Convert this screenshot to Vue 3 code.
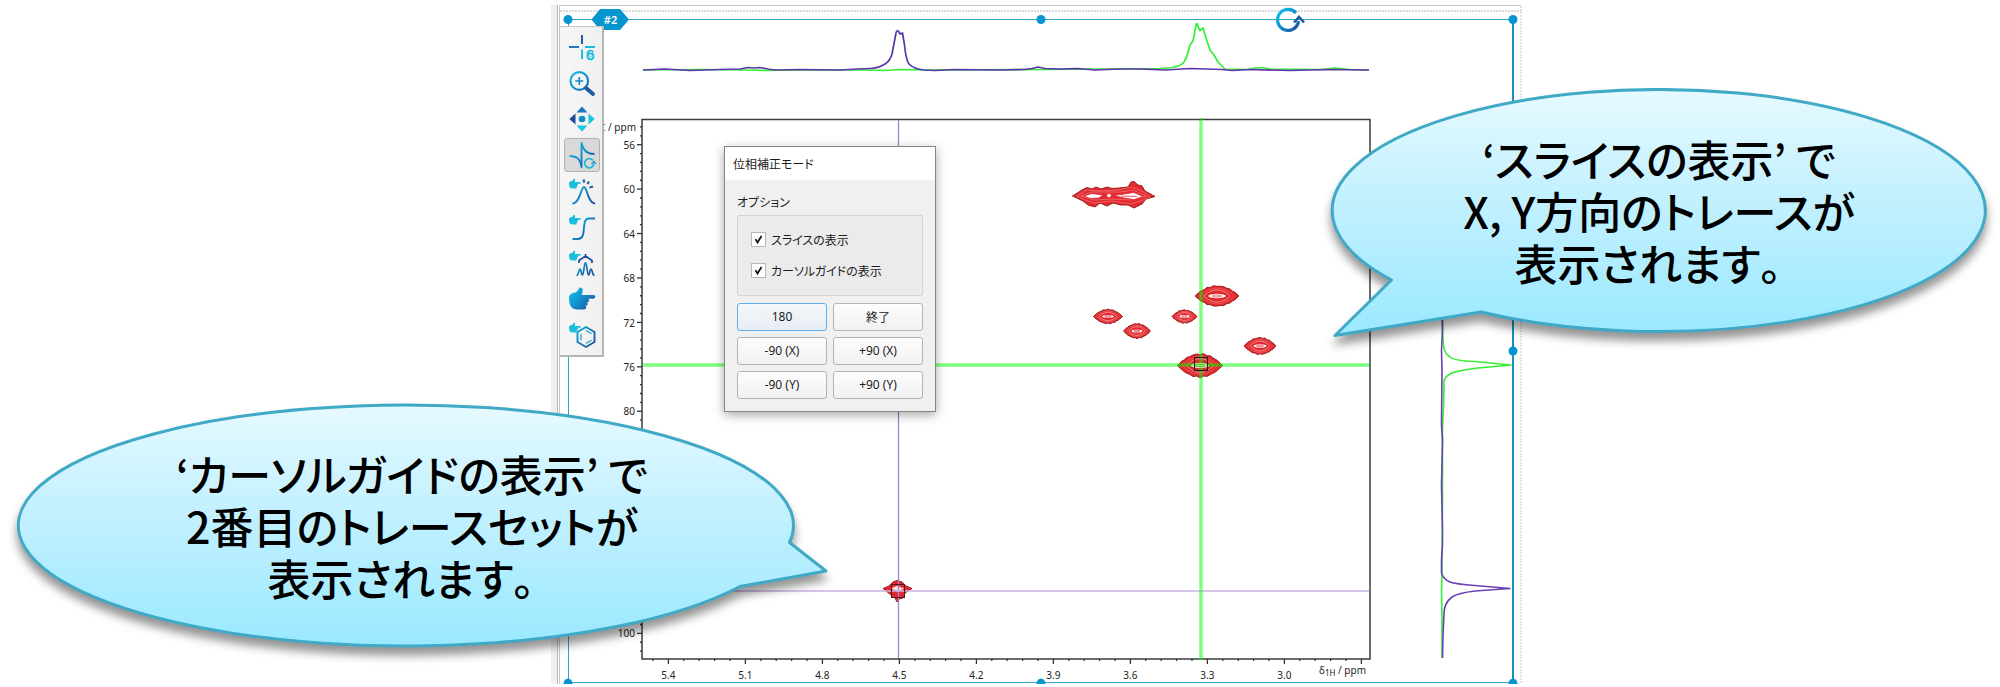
<script setup>
import { ref } from 'vue'

const showSlices = ref(true)
const showGuides = ref(true)
const activeTool = ref('phase')

const tools = [
  { id: 'cursor', label: 'カーソル' },
  { id: 'zoom', label: '拡大' },
  { id: 'move', label: '移動' },
  { id: 'phase', label: '位相補正' },
  { id: 'peak', label: 'ピーク' },
  { id: 'integral', label: '積分' },
  { id: 'multiplet', label: '多重線' },
  { id: 'hand', label: '選択' },
  { id: 'structure', label: '構造' },
]

const xMajor = ['5.4', '5.1', '4.8', '4.5', '4.2', '3.9', '3.6', '3.3', '3.0', '']
const xTicks = []
for (let i = -1; i <= 45; i++) {
  xTicks.push({ x: 668.4 + i * 15.4, major: i % 5 === 0, label: i % 5 === 0 ? xMajor[i / 5] : '' })
}
const xLabels = xTicks.filter((t) => t.label)

const yTicks = []
for (let i = -2; i <= 57; i++) {
  yTicks.push({ y: 144.7 + i * 8.885, major: i % 5 === 0 })
}
const yLabels = [56, 60, 64, 68, 72, 76, 80, 100].map((v) => ({ v, y: 149 + (v - 56) * 11.1 }))

// Outline of one contour level around a cross peak.
function contour(p, k) {
  const pts = []
  const n = 40
  for (let i = 0; i < n; i++) {
    const a = (i / n) * Math.PI * 2
    const c = Math.cos(a)
    const s = Math.sin(a)
    const wobble = 1 + 0.07 * Math.sin(i * 2.7 + p.x) * k
    const px = p.x + c * p.w * k
    const py = p.y + Math.sign(s) * Math.pow(Math.abs(s), 1.9) * p.h * k * wobble
    pts.push(px.toFixed(1) + ',' + py.toFixed(1))
  }
  return pts.join(' ')
}

const peaks = [
  { x: 1217, y: 296, w: 22, h: 10 },
  { x: 1108, y: 316.5, w: 14.5, h: 7 },
  { x: 1137, y: 331, w: 13.5, h: 7.2 },
  { x: 1184.5, y: 316.5, w: 12.5, h: 6.5 },
  { x: 1260, y: 346, w: 16, h: 8.2 },
  { x: 1200, y: 365.5, w: 22.5, h: 11.5 },
]
</script>

<template>
  <main class="stage">
    <svg class="plot" viewBox="0 0 2000 687" aria-hidden="true">
      <defs>
        <linearGradient id="gRot" x1="0" y1="0" x2="1" y2="1">
          <stop offset="0" stop-color="#12c8e8" /><stop offset="0.5" stop-color="#0d8ccc" /><stop offset="1" stop-color="#1f4f9c" />
        </linearGradient>
      </defs>

      <!-- page edges -->
      <rect x="551" y="5" width="6" height="679" fill="#f0f0f0" />
      <path d="M557.5 5V684" stroke="#b8b8b8" />
      <path d="M559.5 684V5.500H1521" stroke="#c8c8c8" fill="none" />
      <path d="M560 11H1521" stroke="#b2b2b2" stroke-dasharray="2 1" />
      <path d="M1521 6V684" stroke="#c9c9c9" stroke-dasharray="2 1" />

      <!-- selection frame -->
      <path d="M568.500 684V19.500H1513" stroke="#2ea3c8" fill="none" />
      <path d="M568 682.500H1513" stroke="#3fa9cf" />
      <path d="M1513 19V684" stroke="#1c8fb8" stroke-width="2" />
      <g fill="#0795cf">
        <circle cx="568" cy="19.500" r="4.500" /><circle cx="1041" cy="19.500" r="4.500" />
        <circle cx="1513" cy="19.500" r="4.500" /><circle cx="1513" cy="351" r="4.500" />
        <path d="M563.500 684a4.500 5.500 0 0 1 9 0zM1036.500 684a4.500 5.500 0 0 1 9 0zM1508.500 684a4.500 5.500 0 0 1 9 0z" />
        <path d="M591.500 19.500L600 9H620L629 19.500L620 30H600Z" />
      </g>
      <text x="610.500" y="24" class="tag">#2</text>

      <path d="M1296 13A10.500 10.500 0 1 0 1298.500 21" fill="none" stroke="url(#gRot)" stroke-width="3.200" />
      <path d="M1294 22.500L1299 17L1304 22.500" fill="none" stroke="#1f5aa6" stroke-width="2.600" />

      <!-- top traces -->
      <g fill="none" stroke-width="1.700" stroke-linejoin="round">
        <path stroke="#35ee35" d="M643 70L700 69.500L745 70L765 70.500L790 70L860 70L885 70.500L900 69.500L930 70L1040 69.500L1110 69L1160 68.500L1172 67.500Q1181 66 1184 62L1187 56L1190 45L1193 41L1196 25Q1197 21 1198.500 28L1200 30.500L1203 28L1206 38L1210 50L1214 55L1218 62L1225 69L1248 69.500L1255 68L1262 67.500L1270 69L1320 69.500L1335 68L1350 69.500L1369 70" />
        <path stroke="#5b35ad" d="M643 70L665 69L690 70.500L720 69.500L740 69L748 67.500L754 68L760 67.500L768 69L775 70L800 69.500L840 70L858 69L870 68.500Q879 68 885 64Q890 61 892 54L896 33Q897 29 899 32L900 34L902.500 33L904.500 45Q906 60 909 64Q914 69 924 70L935 70.500L955 69.500L1000 70L1024 69.500L1032 68.500L1038 67L1045 68.500L1060 69L1078 68.500L1095 70L1120 69L1140 69L1165 70L1190 68.500L1222 69.500L1232 70.500L1250 69.500L1290 70.500L1330 69.500L1369 70" />
      </g>

      <!-- side traces -->
      <g fill="none" stroke-width="1.600" stroke-linejoin="round">
        <path stroke="#35ee35" d="M1443 310L1442.500 330L1443.500 345Q1444 353 1450 357Q1455 361 1475 361.500L1511 365L1478 368Q1455 371 1450 374Q1443 378 1444 384L1443.500 405L1442.500 430L1442.500 500L1442 575L1441.500 590L1442 620L1442 658" />
        <path stroke="#6840b4" d="M1442 310L1442.500 330L1441.500 350L1442 370L1441.500 425L1442.500 440L1441.500 485L1442.500 530L1442.500 545L1441.500 560L1441.500 573Q1444 580 1450 582Q1455 584 1475 585.500L1510 588.500L1475 591Q1458 593 1452 597Q1444 603 1444 614L1443 635L1442.500 658" />
      </g>

      <!-- axes -->
      <path d="M642 119.500H1370V659H642Z" fill="#fff" stroke="#3c3c3c" stroke-width="1.500" />
      <g stroke="#333" stroke-width="1.300">
        <line v-for="t in xTicks" :key="'x' + t.x" :x1="t.x" :x2="t.x" y1="659" :y2="t.major ? 664 : 661" />
        <line v-for="t in yTicks" :key="'y' + t.y" :y1="t.y" :y2="t.y" x2="642" :x1="t.major ? 637 : 640" />
      </g>
      <g class="axis">
        <text v-for="t in xLabels" :key="'xl' + t.x" :x="t.x" y="679" text-anchor="middle">{{ t.label }}</text>
        <text v-for="t in yLabels" :key="'yl' + t.v" :y="t.y" x="635" text-anchor="end">{{ t.v }}</text>
      </g>
      <text class="unit" x="1366" y="674" text-anchor="end">δ<tspan class="sub" dy="2">1H</tspan><tspan dy="-2"> / ppm</tspan></text>
      <text class="unit" x="636" y="131" text-anchor="end"><tspan class="sub">C</tspan> / ppm</text>

      <!-- contour peaks -->
      <g stroke-linejoin="round">
        <path d="M1072.500 196L1082 190L1087 187.500L1092 189L1096 187L1101 189L1107 187L1112 188.500L1119 188L1128 187L1131 182L1134 181.500L1138 185L1142 186L1145 191L1155 196.500L1146 199L1142 204L1134 208L1128 205L1121 205L1113 203L1107 206L1100 203L1095 207L1088 205L1083 201Z" fill="#e2292f" stroke="#9c2020" />
        <g fill="none" stroke="#f79a9a" stroke-width="0.500">
          <path d="M1077 196L1087 190L1100 191L1118 190L1132 187L1142 191L1150 196.500L1141 201L1130 204L1112 201L1094 203L1085 200Z" />
          <path d="M1081 196L1091 192L1106 192L1120 192L1133 190L1146 196L1132 200L1112 199L1094 200Z" />
        </g>
        <g fill="#fff" stroke="#e02a32" stroke-width="0.800">
          <path d="M1084 196L1092 193.500L1103 195L1099 198L1090 198.500Z" />
          <path d="M1114 195.500L1124 194L1134 192.500L1143 196.500L1134 199.500L1124 198Z" />
        </g>
        <path d="M1121 196L1137 196.500" stroke="#e02a32" stroke-width="0.800" />
        <circle cx="1109" cy="195.500" r="2.300" fill="#fff" stroke="#e02a32" />
        <template v-for="p in peaks" :key="p.x">
          <polygon :points="contour(p, 1)" fill="#e2292f" stroke="#9c2020" />
          <polygon :points="contour(p, 0.78)" fill="none" stroke="#f58080" stroke-width="0.500" />
          <polygon :points="contour(p, 0.6)" fill="none" stroke="#ffc4c4" stroke-width="0.600" />
          <ellipse :cx="p.x" :cy="p.y" :rx="p.w * 0.4" :ry="p.h * 0.22" fill="#fff" />
          <ellipse :cx="p.x" :cy="p.y" :rx="p.w * 0.22" :ry="p.h * 0.1" fill="none" stroke="#e02a32" stroke-width="0.700" />
        </template>
        <path d="M883 588.500L889 586L893 582L897 580.500L902 582L906 586L912 588.500L905 593L903 598L899 599L897 602L895 598L891 595Z" fill="#e2292f" stroke="#9c2020" />
        <path d="M890 588.500L897 585.500L905 588.500L898 592Z" fill="#ffdede" stroke="#e02a32" stroke-width="0.700" />
      </g>

      <!-- cursor guides -->
      <g v-show="showGuides">
        <path d="M898.500 120V658" stroke="#9c86d2" stroke-width="1.300" />
        <path d="M643 591H1369" stroke="#c8b3e2" stroke-width="1.300" />
        <rect x="891.500" y="584.500" width="13" height="13" fill="none" stroke="#501818" />
      </g>
      <path d="M1201 118V660M643 365H1369" stroke="#00ff00" stroke-opacity="0.500" stroke-width="3.500" />
      <rect x="1194.500" y="357.500" width="13" height="13" fill="none" stroke="#1c1c1c" />
    </svg>

    <nav class="toolbar" aria-label="ツール">
      <button
        v-for="t in tools"
        :key="t.id"
        type="button"
        class="tool"
        :class="{ active: activeTool === t.id }"
        :aria-label="t.label"
        :aria-pressed="activeTool === t.id"
        @click="activeTool = t.id"
      >
        <svg class="icon" viewBox="0 0 26 26" fill="none" stroke-width="1.900">
          <defs>
            <linearGradient :id="'g' + t.id" gradientUnits="userSpaceOnUse" x1="0" y1="2" x2="26" y2="24">
              <stop offset="0" stop-color="#14c6e6" /><stop offset="0.5" stop-color="#118bc8" /><stop offset="1" stop-color="#1f4a98" />
            </linearGradient>
          </defs>
          <g v-if="t.id === 'cursor'">
            <path d="M13 1V10" stroke="#20509c" /><path d="M0 13H10" stroke="#1a70b4" />
            <path d="M16 13H26M13 15.500V25" stroke="#17bedd" />
            <circle cx="21.500" cy="22.300" r="3" stroke="#17bedd" stroke-width="1.800" />
            <path d="M18.500 22V19.500A3 3 0 0 1 24.300 18.500" stroke="#17bedd" stroke-width="1.600" />
            <circle cx="21.500" cy="22.300" r="0.900" fill="#17bedd" />
          </g>
          <g v-else-if="t.id === 'zoom'">
            <circle cx="10.300" cy="11" r="8.800" stroke="url(#gzoom)" stroke-width="2.200" />
            <path d="M10.300 7V15M6.300 11H14.300" stroke="#118bc8" stroke-width="1.600" />
            <path d="M17 18L24 24" stroke="#1d5ba5" stroke-width="4" stroke-linecap="round" />
          </g>
          <g v-else-if="t.id === 'move'">
            <circle cx="13" cy="13" r="3.300" fill="url(#gmove)" />
            <path d="M13 0.500L18.500 6.500H7.500Z" fill="#1778bb" /><path d="M13 25.500L18.500 19.500H7.500Z" fill="#17c6df" />
            <path d="M0.300 13L6.500 7.500V18.500Z" fill="#1e4b97" /><path d="M25.700 13L19.500 7.500V18.500Z" fill="#17c6df" />
          </g>
          <g v-else-if="t.id === 'phase'">
            <path d="M0.500 14C7 14 11 16 12.500 25V1C15 10 19 12 25.500 12" stroke="url(#gphase)" stroke-linejoin="round" />
            <path d="M24 18.500A4.600 4.600 0 1 0 24.800 22" stroke="#22b7d8" stroke-width="1.700" />
            <path d="M22.500 22L25 19.500L27 22" stroke="#2393c6" stroke-width="1.400" />
          </g>
          <g v-else-if="t.id === 'peak'">
            <path d="M3.500 25.500C11 25.500 12 9 15 9S19 25.500 26 25.500" stroke="url(#gpeak)" />
            <path d="M14.500 1.500L15.300 4.500M20 3.500L18.500 6M24 8.500L20.500 9.500" stroke="#1e5fab" stroke-width="2.200" />
          </g>
          <g v-else-if="t.id === 'integral'">
            <path d="M3.500 25H9C19 25 11 4.500 20 4.500H26" stroke="url(#gintegral)" />
          </g>
          <g v-else-if="t.id === 'multiplet'">
            <path d="M16.500 4V8M10 13V10.500L16.500 6L23 10.500V13" stroke="#1f4a98" stroke-width="1.700" />
            <path d="M7.500 25.500C10 25.500 9.500 19 11 19S12 25 13.500 25S15 12.500 16.500 12.500S18 25 19.500 25S20.500 19 22 19S23 25.500 25.500 25.500" stroke="url(#gmultiplet)" stroke-width="1.700" />
          </g>
          <g v-else-if="t.id === 'structure'">
            <path d="M17 5L25.500 10V20L17 25L8.500 20V10Z" stroke="url(#gstructure)" />
            <path d="M12 12V18.500M17 8.500L22.500 11.700M17 21.500L22.500 18.300" stroke="#17a4d0" stroke-width="1.200" />
          </g>
          <path
            v-if="['peak', 'integral', 'multiplet', 'structure', 'hand'].includes(t.id)"
            :class="{ small: t.id !== 'hand' }"
            :fill="t.id === 'hand' ? 'url(#ghand)' : '#18bedd'"
            d="M0 12C0 8 3 7 6 6.500C9 6 9.500 2 11 1.500C14 1 14.500 5 12.500 9H24.500C26.800 9 26.800 12.500 24.500 12.800H18.500C20.800 13.300 20.500 16 18.500 16.300H17.500C19.500 17 19 19.500 17 19.800H16C18 20.500 17.500 23.500 15 23.500H8C3 23.500 0 20 0 12Z"
          />
        </svg>
      </button>
    </nav>

    <form class="dialog" @submit.prevent>
      <h1 class="title">位相補正モード</h1>
      <div class="body">
        <fieldset class="options">
          <legend>オプション</legend>
          <div class="box">
            <label class="check"><input v-model="showSlices" type="checkbox" /><span class="mark"><svg viewBox="0 0 15 15"><path d="M4 7L6.300 11L11 3.500" /></svg></span>スライスの表示</label>
            <label class="check"><input v-model="showGuides" type="checkbox" /><span class="mark"><svg viewBox="0 0 15 15"><path d="M4 7L6.300 11L11 3.500" /></svg></span>カーソルガイドの表示</label>
          </div>
        </fieldset>
        <div class="actions">
          <button type="button" class="act primary">180</button>
          <button type="button" class="act">終了</button>
          <button type="button" class="act">-90 (X)</button>
          <button type="button" class="act">+90 (X)</button>
          <button type="button" class="act">-90 (Y)</button>
          <button type="button" class="act">+90 (Y)</button>
        </div>
      </div>
    </form>

    <aside class="callout right">
      <svg class="bubble" viewBox="1330 88 658 250" aria-hidden="true">
        <defs>
          <linearGradient id="gBubble" x1="0" y1="0" x2="0" y2="1">
            <stop offset="0" stop-color="#e6faff" /><stop offset="0.400" stop-color="#c6f1ff" /><stop offset="1" stop-color="#9ae9ff" />
          </linearGradient>
        </defs>
        <path d="M1391.500 280A326.500 121 0 1 1 1481 312L1335 335.500Z" fill="url(#gBubble)" stroke="#3fa9c6" stroke-width="3" stroke-linejoin="round" />
      </svg>
      <p class="say">‘スライスの表示’ で<br />X, Y方向のトレースが<br />表示されます<span class="full">。</span></p>
    </aside>

    <aside class="callout left">
      <svg class="bubble" viewBox="16 403 812 246" aria-hidden="true">
        <path d="M740 586.500A387.500 120.500 0 1 1 789.500 542.500L826 571Z" fill="url(#gBubble)" stroke="#3fa9c6" stroke-width="3" stroke-linejoin="round" />
      </svg>
      <p class="say">‘カーソルガイドの表示’ で<br />2番目のトレースセットが<br />表示されます<span class="full">。</span></p>
    </aside>
  </main>
</template>

<style>
body {
  margin: 0;
  background: #fff;
}
</style>

<style scoped>
.stage {
  position: relative;
  overflow: hidden;
  font-family: "Noto Sans", "Noto Sans CJK JP", sans-serif;
  color: #1c1c1c;
}
.plot {
  display: block;
  width: 100%;
  height: auto;
}
.tag {
  font-size: 11px;
  font-weight: 600;
  fill: #fff;
  text-anchor: middle;
}
.axis {
  font-size: 10px;
  fill: #222;
}
.unit {
  font-size: 10px;
  fill: #222;
}
.sub {
  font-size: 8px;
}

.toolbar {
  position: absolute;
  left: 27.95%;
  top: 3.8%;
  display: flex;
  flex-direction: column;
  align-items: center;
  gap: 2px;
  padding: 3px 2px;
  background: linear-gradient(90deg, #f6f6f6, #f0f0f0);
  border: 1px solid #c6c6c6;
  border-right: 2px solid #b4b4b4;
  border-bottom: 2px solid #b4b4b4;
}
.tool {
  display: grid;
  place-items: center;
  width: 36px;
  height: 34px;
  margin-left: 2px;
  padding: 0;
  background: none;
  border: 1px solid transparent;
  border-radius: 3px;
}
.tool.active {
  background: #d9d9d9;
  border-color: #b2b2b2;
}
.icon {
  width: 26px;
  height: 26px;
  overflow: visible;
}
.small {
  transform: scale(0.45);
}

.dialog {
  position: absolute;
  left: 36.2%;
  top: 21.25%;
  box-sizing: border-box;
  width: 212px;
  background: #f0f0f0;
  border: 1px solid #858585;
  box-shadow: 0 3px 10px rgba(0, 0, 0, 0.35);
  font-family: "Noto Sans CJK JP", sans-serif;
  font-size: 12px;
  font-feature-settings: "palt";
}
.title {
  margin: 0;
  padding: 0 8px;
  background: #fff;
  font-size: 12px;
  font-weight: 400;
  line-height: 33px;
}
.body {
  padding: 12px;
}
.options {
  margin: 0;
  padding: 0;
  border: 0;
}
.options legend {
  padding: 0;
  line-height: 20px;
}
.box {
  display: flex;
  flex-direction: column;
  gap: 11px;
  margin-top: 3px;
  padding: 14px 13px;
  background: #ebebeb;
  border: 1px solid #d4d4d4;
  border-radius: 2px;
}
.check {
  display: flex;
  align-items: center;
  gap: 5px;
  line-height: 20px;
}
.check input {
  position: absolute;
  opacity: 0;
  margin: 0;
}
.mark {
  box-sizing: border-box;
  width: 15px;
  height: 15px;
  background: #fff;
  border: 1px solid #b8b8b8;
}
.mark svg {
  display: none;
  width: 13px;
  height: 13px;
  fill: none;
  stroke: #111;
  stroke-width: 2;
}
input:checked + .mark svg {
  display: block;
}
.actions {
  display: grid;
  grid-template-columns: 1fr 1fr;
  gap: 6px;
  margin-top: 7px;
}
.act {
  height: 28px;
  padding: 0;
  background: linear-gradient(#fdfdfd, #f1f1f1);
  border: 1px solid #b4b4b4;
  border-radius: 3px;
  color: #1c1c1c;
  font-family: "Noto Sans", "Noto Sans CJK JP", sans-serif;
  font-size: 12px;
}
.act.primary {
  background: linear-gradient(#f4f7fa, #e6edf3);
  border-color: #5fb0ee;
}

.callout {
  position: absolute;
  display: grid;
}
.right {
  left: 66.5%;
  top: 12.81%;
  width: 32.9%;
}
.left {
  left: 0.8%;
  top: 58.66%;
  width: 40.6%;
}
.bubble {
  grid-area: 1 / 1;
  width: 100%;
  height: auto;
  overflow: visible;
  filter: drop-shadow(0 8px 5px rgba(0, 0, 0, 0.42));
}
.say {
  grid-area: 1 / 1;
  place-self: center;
  position: relative;
  margin: 0;
  padding-bottom: 6px;
  color: #000;
  font-family: "Noto Sans CJK JP", sans-serif;
  font-size: 43px;
  font-weight: 500;
  line-height: 52px;
  font-feature-settings: "palt";
  text-align: center;
  white-space: nowrap;
}
.left .say {
  padding: 0 20px 2px 0;
}
.full {
  font-feature-settings: normal;
}
</style>
